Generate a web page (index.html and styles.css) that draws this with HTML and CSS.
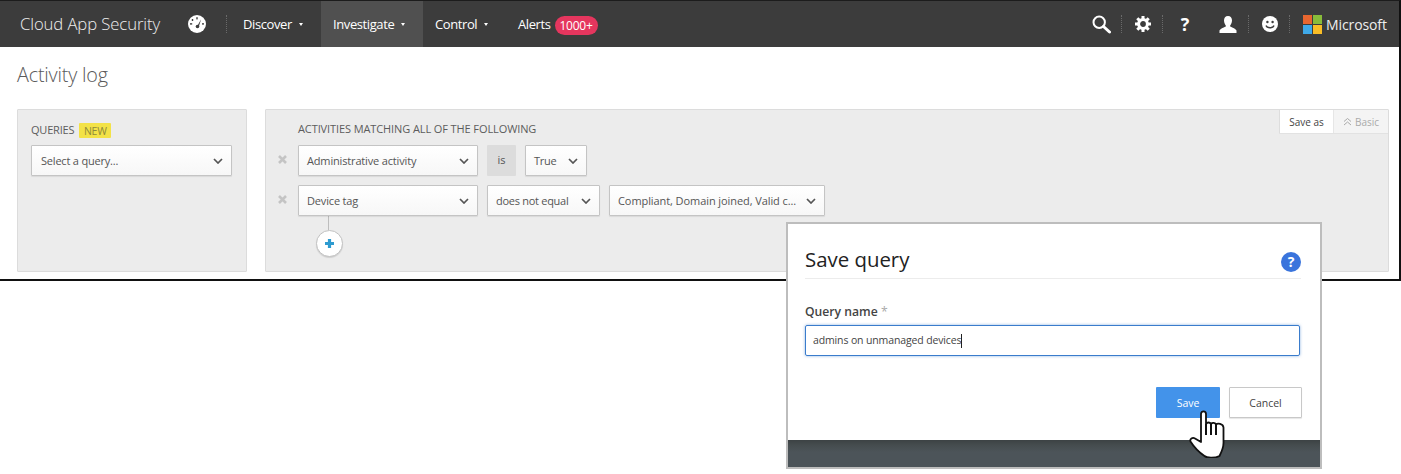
FILE: index.html
```html
<!DOCTYPE html>
<html lang="en">
<head>
<meta charset="utf-8">
<title>Activity log</title>
<link rel="stylesheet" href="styles.css">
</head>
<body>
<div class="frame">
  <header class="nav">
    <div class="brand">Cloud App Security</div>
    <svg class="gauge" width="18" height="18" viewBox="0 0 18 18"><circle cx="9" cy="9" r="9" fill="#fff"/><path d="M9 11.5 L13 4.5 L10.6 12.2Z" fill="#3c3c3c"/><circle cx="9.5" cy="11.5" r="1.8" fill="#3c3c3c"/><g fill="#3c3c3c"><rect x="8.3" y="2.2" width="1.4" height="2.2"/><rect x="3.8" y="4" width="1.4" height="2"/><rect x="2" y="8.2" width="2.2" height="1.4"/><rect x="14" y="8.2" width="2" height="1.4"/></g></svg>
    <span class="sep sep-first"></span>
    <a class="item item-discover">Discover<i class="caret"></i></a>
    <a class="item item-active">Investigate<i class="caret"></i></a>
    <a class="item item-control">Control<i class="caret"></i></a>
    <a class="item item-alerts">Alerts<span class="badge">1000+</span></a>
    <div class="nav-right">
      <svg class="ico-search" width="19" height="19" viewBox="0 0 19 19"><circle cx="7.2" cy="7.2" r="5.7" fill="none" stroke="#fff" stroke-width="2"/><path d="M11.5 11.5 L17.5 17" stroke="#fff" stroke-width="3" stroke-linecap="round"/></svg>
      <span class="sep sep-a"></span>
      <svg class="ico-gear" width="16" height="16" viewBox="0 0 16 16"><circle cx="8" cy="8" r="4.4" fill="none" stroke="#fff" stroke-width="3"/><g stroke="#fff" stroke-width="3"><path d="M8 0v3M8 13v3M0 8h3M13 8h3M2.3 2.3l2.1 2.1M11.6 11.6l2.1 2.1M13.7 2.3l-2.1 2.1M4.4 11.6l-2.1 2.1"/></g></svg>
      <span class="sep sep-b"></span>
      <span class="ico-help">?</span>
      <svg class="ico-user" width="18" height="17" viewBox="0 0 18 17"><path d="M9 0c2.6 0 4 2 4 4.500S11.600 9 11 10c0 1 5.500 2 6.500 4.500V17H.5v-2.500C1.500 12 7 11 7 10 6.400 9 5 7 5 4.500S6.400 0 9 0z" fill="#fff"/></svg>
      <span class="sep sep-c"></span>
      <svg class="ico-smile" width="16" height="16" viewBox="0 0 16 16"><circle cx="8" cy="8" r="8" fill="#fff"/><circle cx="5.400" cy="6" r="1.200" fill="#3c3c3c"/><circle cx="10.600" cy="6" r="1.200" fill="#3c3c3c"/><path d="M4 9.500c1 3 7 3 8 0" fill="none" stroke="#3c3c3c" stroke-width="1.300"/></svg>
      <span class="sep sep-d"></span>
      <svg class="ico-ms" width="19" height="19" viewBox="0 0 19 19"><rect width="9" height="9" fill="#e8662f"/><rect x="10" width="9" height="9" fill="#88bb3a"/><rect y="10" width="9" height="9" fill="#3fa9e8"/><rect x="10" y="10" width="9" height="9" fill="#f9bd26"/></svg>
      <span class="ms-text">Microsoft</span>
    </div>
  </header>

  <h1 class="page-title">Activity log</h1>

  <div class="panels">
    <section class="panel panel-left">
      <div class="label-row"><span class="label label-queries">QUERIES</span><span class="new">NEW</span></div>
      <div class="select select-query">Select a query...<svg class="chev" width="10" height="6" viewBox="0 0 10 6"><path d="M1 1l4 4 4-4" fill="none" stroke="#555" stroke-width="1.700"/></svg></div>
    </section>
    <section class="panel panel-right">
      <div class="tabs"><span class="tab tab-on">Save as</span><span class="tab tab-off"><svg width="9" height="9" viewBox="0 0 9 9"><path d="M1 4.500l3.500-3 3.500 3M1 8l3.500-3 3.500 3" fill="none" stroke="#aaa" stroke-width="1"/></svg>Basic</span></div>
      <div class="label label-match">ACTIVITIES MATCHING ALL OF THE FOLLOWING</div>
      <div class="row">
        <svg class="x" width="9" height="9" viewBox="0 0 9 9"><path d="M1 1l7 7M8 1l-7 7" stroke="#c4c4c4" stroke-width="2.600"/></svg>
        <div class="select s-field">Administrative activity<svg class="chev" width="10" height="6" viewBox="0 0 10 6"><path d="M1 1l4 4 4-4" fill="none" stroke="#555" stroke-width="1.700"/></svg></div>
        <div class="op-static">is</div>
        <div class="select s-true">True<svg class="chev" width="10" height="6" viewBox="0 0 10 6"><path d="M1 1l4 4 4-4" fill="none" stroke="#555" stroke-width="1.700"/></svg></div>
      </div>
      <div class="row row-two">
        <svg class="x" width="9" height="9" viewBox="0 0 9 9"><path d="M1 1l7 7M8 1l-7 7" stroke="#c4c4c4" stroke-width="2.600"/></svg>
        <div class="select s-field">Device tag<svg class="chev" width="10" height="6" viewBox="0 0 10 6"><path d="M1 1l4 4 4-4" fill="none" stroke="#555" stroke-width="1.700"/></svg></div>
        <div class="select s-op">does not equal<svg class="chev" width="10" height="6" viewBox="0 0 10 6"><path d="M1 1l4 4 4-4" fill="none" stroke="#555" stroke-width="1.700"/></svg></div>
        <div class="select s-val">Compliant, Domain joined, Valid c...<svg class="chev" width="10" height="6" viewBox="0 0 10 6"><path d="M1 1l4 4 4-4" fill="none" stroke="#555" stroke-width="1.700"/></svg></div>
      </div>
      <div class="connector"></div>
      <div class="add"><svg width="11" height="11" viewBox="0 0 11 11"><path d="M5.500 1v9M1 5.500h9" stroke="#2e9bd0" stroke-width="3.200"/></svg></div>
    </section>
  </div>
</div>

<div class="modal">
  <div class="modal-body">
    <div class="modal-head">
      <h2 class="modal-title">Save query</h2>
      <span class="help">?</span>
    </div>
    <div class="field-label">Query name <span class="req">*</span></div>
    <div class="input">admins on unmanaged devices<span class="text-cursor"></span></div>
    <div class="actions">
      <span class="btn btn-save">Save</span>
      <span class="btn btn-cancel">Cancel</span>
    </div>
  </div>
  <div class="modal-foot"></div>
  <svg class="hand" width="38" height="48" viewBox="0 0 38 48"><path d="M12 4c0-3.500 5-3.500 5 0v10c1-2 4-2 5 0 1-1.500 4-1.500 5 .5 1.500-1.500 7-1 7.500 3V33c0 5-2 9-4 13-5 2.500-13 2-15 0C11 43 5 37 1.500 31.500c-1-2.500 2-4.500 4.500-3l6 3.500z" fill="#fff" stroke="#111" stroke-width="1.800" stroke-linejoin="round"/><path d="M17 14v11M22 14v11M27 15v10" stroke="#111" stroke-width="2" fill="none"/></svg>
</div>
</body>
</html>
```

FILE: styles.css
```css
* { box-sizing: border-box; }
html, body { margin: 0; padding: 0; background: #fff; }
body { width: 1401px; height: 474px; overflow: hidden; position: relative; font-family: "Open Sans", "Noto Sans", sans-serif; color: #555; }

.frame { width: 1401px; height: 281px; border-top: 1px solid #1c1c1c; border-right: 2px solid #111; border-bottom: 2px solid #111; background: #fff; }

.nav { height: 46px; background: #3c3c3c; display: flex; align-items: center; color: #fff; font-size: 13px; }
.brand { margin-left: 20px; width: 168px; font-size: 16.700px; font-weight: 300; letter-spacing: -.1px; white-space: nowrap; color: #eee; position: relative; top: -1px; }
.gauge { flex: none; }
.sep { flex: none; width: 0; height: 18px; border-left: 1px dotted #6a6a6a; }
.sep-first { margin-left: 20px; }
.item { height: 46px; display: flex; align-items: center; white-space: nowrap; letter-spacing: -.4px; }
.item-discover { padding-left: 16px; width: 94px; }
.item-active { background: #505050; padding-left: 12px; width: 102px; }
.item-control { padding-left: 12px; width: 83px; }
.item-alerts { padding-left: 12px; }
.caret { width: 0; height: 0; border-left: 2.500px solid transparent; border-right: 2.500px solid transparent; border-top: 3px solid #fff; margin-left: 7px; }
.badge { margin-left: 4px; background: #e5365e; color: #fff; border-radius: 10px; font-size: 12px; height: 19px; width: 43px; display: flex; align-items: center; justify-content: center; position: relative; top: 1px; letter-spacing: -.2px; }

.nav-right { margin-left: auto; display: flex; align-items: center; padding-right: 12px; }
.ico-search { flex: none; }
.sep-a { margin-left: 10px; }
.ico-gear { margin-left: 13px; flex: none; }
.sep-b { margin-left: 11px; }
.ico-help { margin-left: 16px; width: 12px; font-size: 18px; font-weight: 700; text-align: center; line-height: 20px; }
.ico-user { margin-left: 28px; flex: none; }
.sep-c { margin-left: 11px; }
.ico-smile { margin-left: 13px; flex: none; }
.sep-d { margin-left: 11px; }
.ico-ms { margin-left: 13px; flex: none; }
.ms-text { margin-left: 4px; width: 61px; font-size: 14px; font-weight: 500; letter-spacing: -.1px; color: #eee; white-space: nowrap; }

.page-title { margin: 14px 0 0 17px; height: 48px; font-size: 19.800px; font-weight: 300; line-height: 27px; color: #5a5a5a; letter-spacing: -.2px; }

.panels { display: flex; gap: 18px; padding-left: 17px; width: 1389px; }
.panel { height: 163px; background: #ececec; border: 1px solid #dcdcdc; position: relative; border-radius: 1px; }
.panel-left { width: 230px; padding: 12px 13px 0; }
.panel-right { width: 1124px; padding: 11px 0 0 32px; }

.label-row { display: flex; align-items: center; height: 16px; margin-bottom: 7px; }
.label { font-size: 11px; font-weight: 400; color: #5c5c5c; letter-spacing: -.1px; line-height: 15px; }
.label-queries { position: relative; top: -1px; letter-spacing: -.2px; }
.new { margin-left: 5px; width: 32px; height: 15px; background: #f3e247; border-radius: 1px; font-size: 10.500px; line-height: 17px; text-align: center; color: #8e8a3a; letter-spacing: -.2px; }
.label-match { height: 16px; margin-bottom: 8px; }

.select { position: relative; height: 31px; background: linear-gradient(#fff, #f7f7f7); border: 1px solid #c4c4c4; box-shadow: 0 1px 1px rgba(0,0,0,.08); font-size: 11px; line-height: 29px; padding-left: 8px; color: #555; white-space: nowrap; flex: none; border-radius: 1px; letter-spacing: -.16px; }
.chev { position: absolute; right: 8px; top: 12px; }
.select-query { width: 201px; padding-left: 9px; letter-spacing: -.2px; }

.row { display: flex; position: relative; gap: 9px; height: 31px; }
.row-two { margin-top: 9px; }
.x { position: absolute; left: -20px; top: 10px; }
.s-field { width: 180px; }
.op-static { width: 29px; height: 31px; background: #dcdcdc; font-size: 11px; line-height: 29px; text-align: center; border-radius: 1px; }
.s-true { width: 62px; letter-spacing: -.3px; }
.s-op { width: 113px; letter-spacing: -.28px; }
.s-val { width: 216px; letter-spacing: -.08px; }

.connector { width: 1px; height: 14px; background: #bdbdbd; margin-left: 30px; }
.add { width: 27px; height: 27px; margin-left: 18px; border-radius: 50%; background: #fff; border: 1px solid #c2c2c2; display: flex; align-items: center; justify-content: center; box-shadow: 0 1px 1px rgba(0,0,0,.12); }

.tabs { position: absolute; top: 0; right: 0; display: flex; height: 24px; font-size: 10px; line-height: 24px; border-bottom: 1px solid #e2e2e2; }
.tab { display: flex; align-items: center; justify-content: center; width: 54px; }
.tab-on { background: #fff; color: #444; border-left: 1px solid #ddd; }
.tab-off { background: #f4f4f4; color: #aaa; width: 55px; border-left: 1px solid #e6e6e6; gap: 3px; }

.modal { position: absolute; left: 786px; top: 222px; width: 536px; height: 247px; border: 2px solid #bdbdbd; background: #fff; display: flex; flex-direction: column; }
.modal-body { flex: 1; padding: 0 19px 0 17px; }
.modal-head { height: 55px; border-bottom: 1px solid #ececec; display: flex; align-items: center; justify-content: space-between; padding-top: 15px; }
.modal-title { margin: 0; font-size: 20.400px; font-weight: 400; color: #222; line-height: 28px; }
.help { width: 20px; height: 20px; border-radius: 50%; background: #3a74dc; color: #fff; font-size: 14px; font-weight: 700; text-align: center; line-height: 20px; position: relative; top: 3px; }
.field-label { margin-top: 24px; font-size: 12.200px; font-weight: 600; line-height: 18px; color: #444; }
.req { color: #aaa; font-weight: 400; }
.input { margin-top: 4px; width: 495px; height: 31px; border: 1px solid #3a7ccc; border-radius: 2px; box-shadow: 0 0 3px rgba(58,124,204,.6); font-size: 10.500px; line-height: 29px; padding-left: 7px; color: #444; display: flex; align-items: center; letter-spacing: -.13px; }
.text-cursor { width: 1px; height: 14px; background: #222; }
.actions { margin-top: 31px; display: flex; justify-content: flex-end; gap: 9px; width: 497px; }
.btn { height: 31px; font-size: 10.500px; display: flex; align-items: center; justify-content: center; border-radius: 1px; }
.btn-save { width: 64px; background: #4393ea; color: #fff; }
.btn-cancel { width: 73px; background: #fff; border: 1px solid #c8c8c8; color: #444; box-shadow: 0 1px 1px rgba(0,0,0,.1); }
.modal-foot { height: 27px; flex: none; background: linear-gradient(#3c4244 0, #454c4e 5px, #4c5459 12px); }
.hand { position: absolute; left: 401px; top: 186px; }
```
